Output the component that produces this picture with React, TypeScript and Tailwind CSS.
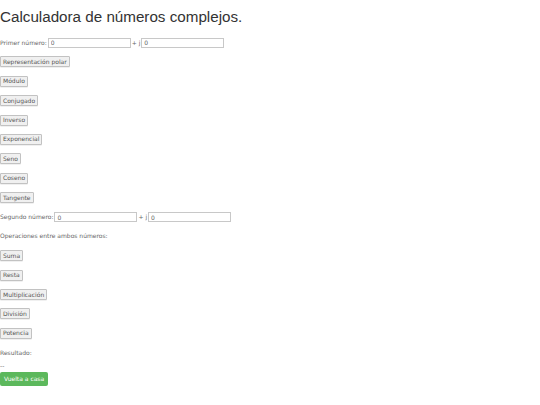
import React from 'react'

const unary = ['Representación polar', 'Módulo', 'Conjugado', 'Inverso', 'Exponencial', 'Seno', 'Coseno', 'Tangente']
const binary = ['Suma', 'Resta', 'Multiplicación', 'División', 'Potencia']

function Btn({ label }: { label: string }) {
  return (
    <button className="h-[11px] px-[2px] border border-[#c2c2c2] bg-[#f0f0f0] rounded-[1px] text-[6px] leading-none text-[#555] shadow-[0_0.5px_0.5px_rgba(0,0,0,0.12)]">
      {label}
    </button>
  )
}

function NumberRow({ label }: { label: string }) {
  return (
    <div className="flex items-center h-[11px]">
      <span className="mr-[1px]">{label}</span>
      <input
        defaultValue="0"
        className="w-[83px] h-[10px] border border-[#c8c8c8] px-[2px] text-[6px] text-[#666] outline-none"
      />
      <span className="mx-[1px]">+ j</span>
      <input
        defaultValue="0"
        className="w-[83px] h-[10px] border border-[#c8c8c8] px-[2px] text-[6px] text-[#666] outline-none"
      />
    </div>
  )
}

export default function App() {
  return (
    <div
      className="w-[540px] h-[405px] bg-white text-[#666] text-[6px] leading-none antialiased"
      style={{ fontFamily: '"DejaVu Sans", Verdana, sans-serif' }}
    >
      <h1
        className="pt-[8px] text-[15.2px] leading-[18px] text-[#333]"
        style={{ fontFamily: '"Liberation Sans", Arial, sans-serif' }}
      >
        Calculadora de números complejos.
      </h1>

      <div className="mt-[11px] flex flex-col items-start gap-[8.4px]">
        <NumberRow label="Primer número:" />
        {unary.map((u) => (
          <Btn key={u} label={u} />
        ))}
        <NumberRow label="Segundo número:" />
        <p className="h-[11px] flex items-center">Operaciones entre ambos números:</p>
        {binary.map((b) => (
          <Btn key={b} label={b} />
        ))}
        <p className="h-[11px] flex items-center">Resultado:</p>
      </div>
      <p className="mt-[5px] h-[6px]">--</p>
      <button className="mt-[3px] h-[14px] px-[4px] rounded-[2px] bg-[#5cb85c] text-white text-[6px] leading-none">
        Vuelta a casa
      </button>
    </div>
  )
}
